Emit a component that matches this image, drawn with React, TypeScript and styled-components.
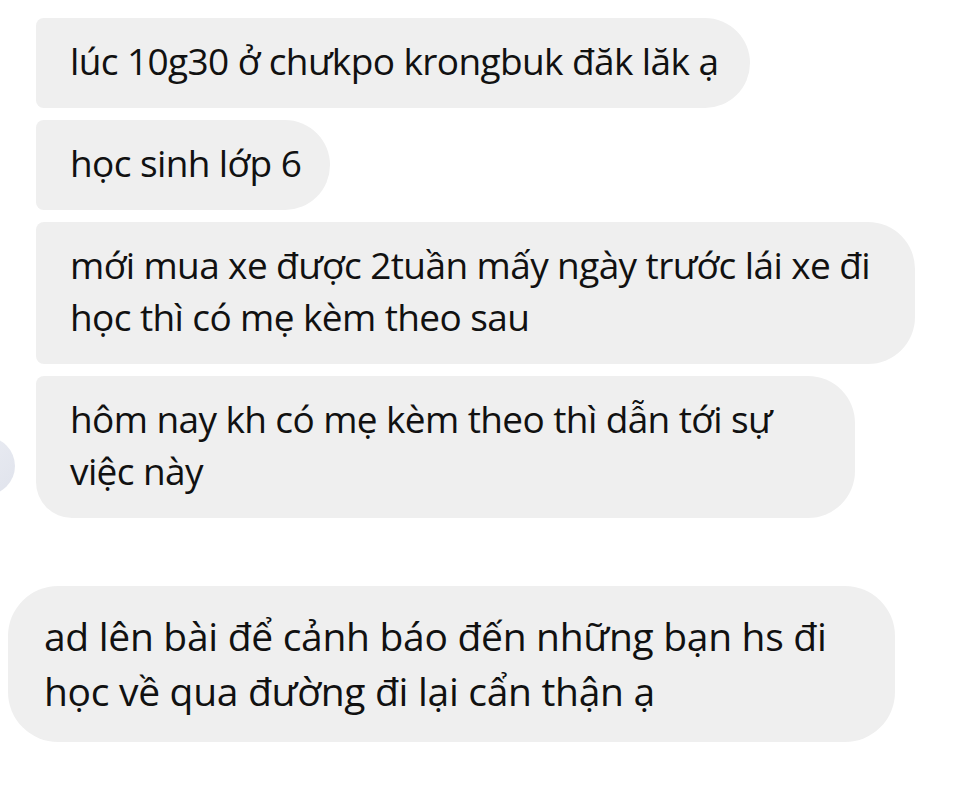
import React from 'react'
import styled, { createGlobalStyle } from 'styled-components'

const GlobalStyle = createGlobalStyle`
  html, body {
    margin: 0;
    padding: 0;
    background: #ffffff;
  }
  body {
    font-family: 'Open Sans', 'Noto Sans', sans-serif;
    color: #111111;
    overflow: hidden;
  }
`

type TMessage = {
  lines: string[]
  width: number
}

const Page = styled.div`
  width: 980px;
  height: 796px;
  display: flex;
  flex-direction: column;
  padding-top: 18px;
  box-sizing: border-box;
`

const Group = styled.div`
  display: flex;
  align-items: flex-end;
`

const AvatarSlot = styled.div`
  width: 36px;
  flex-shrink: 0;
  display: flex;
  align-items: flex-end;
`

const Avatar = styled.div`
  width: 58px;
  height: 58px;
  margin-left: -43px;
  margin-bottom: 23px;
  border-radius: 50%;
  background: linear-gradient(135deg, #eceef4, #e0e3ec);
`

const Stack = styled.div`
  display: flex;
  flex-direction: column;
  align-items: flex-start;
  gap: 12px;
`

const Bubble = styled.div<{ $w: number; $last: boolean }>`
  box-sizing: border-box;
  width: ${({ $w }) => $w}px;
  padding: 17px 0 21px 34px;
  background: #efefef;
  font-size: 37px;
  line-height: 52px;
  letter-spacing: -0.6px;
  white-space: nowrap;
  border-radius: 8px 47px 47px ${({ $last }) => ($last ? 36 : 8)}px;
`

const Single = styled.div`
  box-sizing: border-box;
  width: 887px;
  margin: 68px 0 0 8px;
  padding: 22px 0 24px 36px;
  background: #efefef;
  border-radius: 50px;
  font-size: 39px;
  line-height: 55px;
  letter-spacing: -0.3px;
  white-space: nowrap;
`

const messages: TMessage[] = [
  { lines: ['lúc 10g30 ở chưkpo krongbuk đăk lăk ạ'], width: 714 },
  { lines: ['học sinh lớp 6'], width: 294 },
  {
    lines: ['mới mua xe được 2tuần mấy ngày trước lái xe đi', 'học thì có mẹ kèm theo sau'],
    width: 879
  },
  {
    lines: ['hôm nay kh có mẹ kèm theo thì dẫn tới sự', 'việc này'],
    width: 819
  }
]

const Lines: React.FC<{ lines: string[] }> = ({ lines }) => (
  <>
    {lines.map((line, i) => (
      <div key={i}>{line}</div>
    ))}
  </>
)

export default function App(): JSX.Element {
  return (
    <Page>
      <GlobalStyle />
      <Group>
        <AvatarSlot>
          <Avatar />
        </AvatarSlot>
        <Stack>
          {messages.map((m, i) => (
            <Bubble key={i} $w={m.width} $last={i === messages.length - 1}>
              <Lines lines={m.lines} />
            </Bubble>
          ))}
        </Stack>
      </Group>
      <Single>
        <Lines
          lines={['ad lên bài để cảnh báo đến những bạn hs đi', 'học về qua đường đi lại cẩn thận ạ']}
        />
      </Single>
    </Page>
  )
}
